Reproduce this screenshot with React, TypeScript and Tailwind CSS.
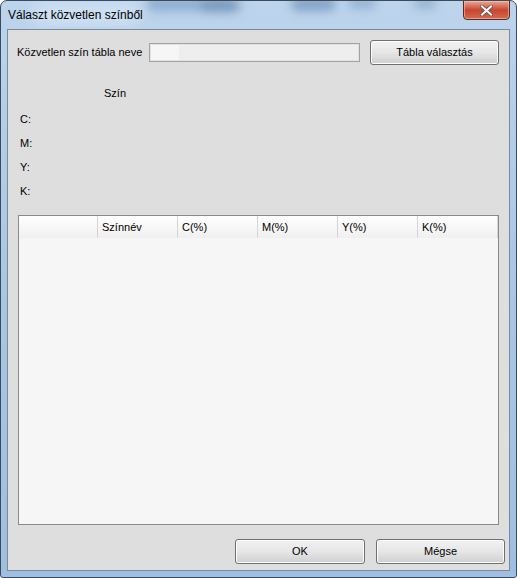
import React from "react";

const font = { fontFamily: '"Liberation Sans", Arial, sans-serif' };

function Btn({ label, w }: { label: string; w: string }) {
  return (
    <div
      className={`${w} h-[25px] rounded-[3px] border border-[#707070] bg-gradient-to-b from-[#f2f2f2] via-[#e6e6e6] to-[#cfcfcf] shadow-[inset_0_0_0_1px_#fcfcfc] flex items-center justify-center text-[11px] text-black`}
    >
      {label}
    </div>
  );
}

export default function App() {
  const cols = ["", "Színnév", "C(%)", "M(%)", "Y(%)", "K(%)"];
  return (
    <div className="w-[517px] h-[578px] bg-white" style={font}>
      <div className="relative w-[517px] h-[578px] rounded-t-[7px] rounded-b-[3px] border border-[#3d4a57] bg-gradient-to-b from-[#bcd4ec] via-[#a9c6e6] to-[#9fbfe2] flex flex-col overflow-hidden">
        {/* blurred aero spots */}
        <div className="absolute left-[145px] top-[-4px] w-[90px] h-[14px] rounded-full bg-[#7f9ec2] blur-[5px] opacity-70" />
        <div className="absolute left-[290px] top-[-4px] w-[45px] h-[14px] rounded-full bg-[#6f8fb5] blur-[5px] opacity-70" />
        <div className="absolute left-[347px] top-[-4px] w-[28px] h-[12px] rounded-full bg-[#7f9ec2] blur-[5px] opacity-60" />
        <div className="absolute left-[413px] top-[-4px] w-[22px] h-[12px] rounded-full bg-[#7f9ec2] blur-[5px] opacity-60" />
        <div className="absolute left-[200px] top-[0px] w-[40px] h-[10px] rounded-full bg-[#5f80a8] blur-[5px] opacity-50" />
        <div className="absolute left-[30px] top-[2px] w-[110px] h-[22px] rounded-full bg-[#d5e5f5] blur-[8px] opacity-80" />

        {/* title bar */}
        <div className="relative h-[28px] flex items-center pl-[7px] text-[12px] text-black">
          Választ közvetlen színből
        </div>
        <div className="absolute right-[6px] top-[-1px] w-[47px] h-[20px] rounded-b-[4px] border border-[#5a2a22] bg-gradient-to-b from-[#e9a797] via-[#c8452f] to-[#d56a4c] shadow-[inset_0_0_0_1px_rgba(255,210,200,0.5)] flex items-center justify-center">
          <svg width="13" height="11" viewBox="0 0 13 11">
            <path d="M2 1.5 L11 9.5 M11 1.5 L2 9.5" stroke="#6b4a44" strokeWidth="3.6" strokeLinecap="square" />
            <path d="M2 1.5 L11 9.5 M11 1.5 L2 9.5" stroke="#ffffff" strokeWidth="2" strokeLinecap="square" />
          </svg>
        </div>

        {/* content */}
        <div className="relative mx-[6px] h-[542px] border border-[#7b8a9b] bg-[#dedede] flex flex-col text-[11px] text-black">
          <div className="mt-[10px] h-[25px] flex items-center">
            <div className="ml-[9px] w-[132px]">Közvetlen szín tábla neve</div>
            <div className="w-[211px] h-[19px] border border-[#a3a3a3] shadow-[inset_0_0_0_1px_#e2e2e2] bg-[#eeeeee] flex">
              <div className="ml-[1px] mt-[1px] w-[28px] h-[15px] bg-[#f6f6f6]" />
            </div>
            <div className="ml-[10px]">
              <Btn label="Tábla választás" w="w-[129px]" />
            </div>
          </div>

          <div className="mt-[20px] pl-[96px] h-[16px] leading-[16px]">Szín</div>
          <div className="mt-[6px] pl-[12px] flex flex-col leading-[24px]">
            <div>C:</div>
            <div>M:</div>
            <div>Y:</div>
            <div>K:</div>
          </div>

          <div className="mt-[12px] ml-[10px] w-[481px] h-[310px] border border-[#8a8a8a] bg-[#f6f6f6] flex flex-col">
            <div className="h-[22px] flex bg-gradient-to-b from-[#ffffff] to-[#f0f0f0]">
              {cols.map((c, i) => (
                <div
                  key={i}
                  className={`${i === 0 ? "w-[79px]" : "w-[80px]"} h-full border-r border-[#d5d5d5] pl-[4px] flex items-center`}
                >
                  {c}
                </div>
              ))}
            </div>
          </div>

          <div className="mt-[14px] flex justify-end gap-[11px] pr-[4px]">
            <Btn label="OK" w="w-[130px]" />
            <Btn label="Mégse" w="w-[129px]" />
          </div>
        </div>
      </div>
    </div>
  );
}
